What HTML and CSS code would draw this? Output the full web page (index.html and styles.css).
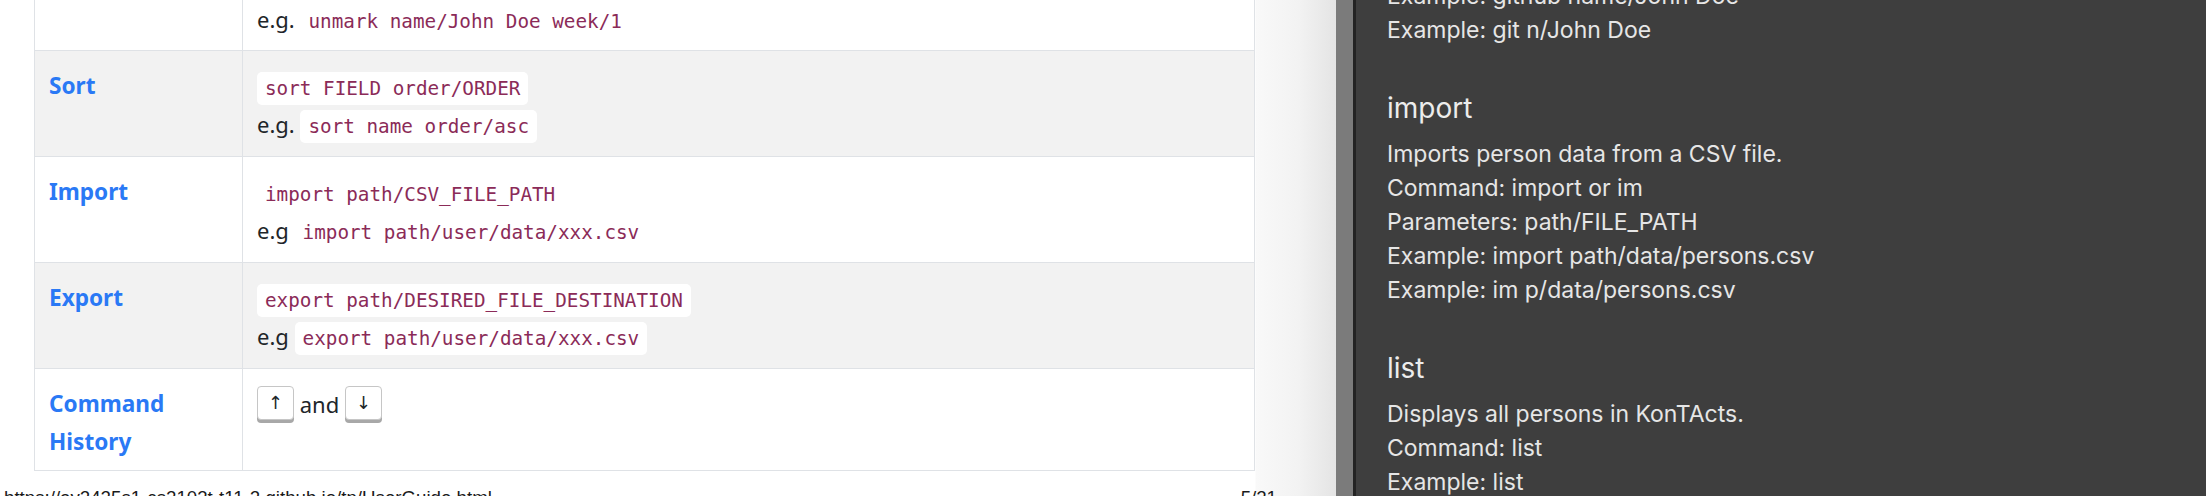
FILE: index.html
```html
<!DOCTYPE html>
<html lang="en">
<head>
<meta charset="utf-8">
<title>User Guide</title>
<link rel="stylesheet" href="styles.css">
</head>
<body>
<div class="screen">
  <div class="page">
    <table class="cmd-table">
      <colgroup><col class="col-label"><col class="col-content"></colgroup>
      <tr class="row row-first">
        <td class="label"></td>
        <td class="content"><div class="line">e.g. <code class="code">unmark name/John Doe week/1</code></div></td>
      </tr>
      <tr class="row row-alt">
        <td class="label">Sort</td>
        <td class="content">
          <div class="line"><code class="code">sort FIELD order/ORDER</code></div>
          <div class="line">e.g. <code class="code">sort name order/asc</code></div>
        </td>
      </tr>
      <tr class="row">
        <td class="label">Import</td>
        <td class="content">
          <div class="line"><code class="code">import path/CSV_FILE_PATH</code></div>
          <div class="line">e.g <code class="code">import path/user/data/xxx.csv</code></div>
        </td>
      </tr>
      <tr class="row row-alt">
        <td class="label">Export</td>
        <td class="content">
          <div class="line"><code class="code">export path/DESIRED_FILE_DESTINATION</code></div>
          <div class="line">e.g <code class="code">export path/user/data/xxx.csv</code></div>
        </td>
      </tr>
      <tr class="row row-last">
        <td class="label">Command History</td>
        <td class="content">
          <div class="line"><kbd class="key">↑</kbd> and <kbd class="key">↓</kbd></div>
        </td>
      </tr>
    </table>
    <div class="footer">
      <span>https://ay2425s1-cs2103t-t11-2.github.io/tp/UserGuide.html</span>
      <span>5/21</span>
    </div>
  </div>
  <div class="gutter"></div>
  <div class="divider"></div>
  <div class="help">
    <div class="help-inner">
      <section class="help-section">
        <p>Example: github name/John Doe</p>
        <p>Example: git n/John Doe</p>
      </section>
      <section class="help-section">
        <h2 class="help-title">import</h2>
        <p>Imports person data from a CSV file.</p>
        <p>Command: import or im</p>
        <p>Parameters: path/FILE_PATH</p>
        <p>Example: import path/data/persons.csv</p>
        <p>Example: im p/data/persons.csv</p>
      </section>
      <section class="help-section">
        <h2 class="help-title">list</h2>
        <p>Displays all persons in KonTActs.</p>
        <p>Command: list</p>
        <p>Example: list</p>
      </section>
    </div>
  </div>
</div>
</body>
</html>
```

FILE: styles.css
```css
* { box-sizing: border-box; }

html, body {
  margin: 0;
  padding: 0;
  width: 2206px;
  height: 496px;
  overflow: hidden;
  background: #ffffff;
}

.screen {
  display: flex;
  width: 2206px;
  height: 496px;
}

.page {
  flex: none;
  width: 1336px;
  display: flex;
  flex-direction: column;
  background: linear-gradient(to right, #ffffff 0, #ffffff 1255px, #f9f9f9 1256px, #f2f2f2 1300px, #e4e4e4 1336px);
}

.cmd-table {
  margin-left: 34px;
  width: 1221px;
  border-collapse: collapse;
  table-layout: fixed;
  font-family: "Noto Sans", "Open Sans", sans-serif;
  font-size: 22px;
  line-height: 38px;
  color: #212529;
}

.col-label { width: 208px; }

.cmd-table td {
  border: 1px solid #dfe2e6;
  padding: 16px 14px 13px 14px;
  vertical-align: top;
  background: #ffffff;
}

.line {
  height: 38px;
  white-space: nowrap;
}

.row-first td {
  border-top: 0;
  padding-top: 0;
  padding-bottom: 12px;
}

.row-alt td { background: #f2f2f2; }

.row-last td { padding-bottom: 9px; }

.label {
  font-weight: 700;
  font-size: 22.6px;
  color: #2a79f5;
}

.code {
  font-family: "DejaVu Sans Mono", "Liberation Mono", monospace;
  font-size: 19.3px;
  line-height: 22px;
  color: #8b2b58;
  background: #ffffff;
  border-radius: 5px;
  padding: 5px 8px;
}

.key {
  display: inline-block;
  width: 37px;
  height: 34px;
  margin-top: 1px;
  border: 1px solid #c6c6c6;
  border-radius: 4px;
  box-shadow: 0 3px 0 #a8a8a8;
  background: #ffffff;
  text-align: center;
  font-family: "DejaVu Sans", sans-serif;
  font-size: 18px;
  line-height: 32px;
  color: #212529;
  vertical-align: top;
}

.footer {
  display: flex;
  justify-content: space-between;
  margin-top: 17px;
  padding: 0 59px 0 4px;
  font-family: "Liberation Sans", Arial, sans-serif;
  font-size: 18.7px;
  line-height: 20px;
  color: #1a1a1a;
}

.gutter {
  flex: none;
  width: 17px;
  background: #7b7b7b;
}

.divider {
  flex: none;
  width: 3px;
  background: #232323;
}

.help {
  flex: 1;
  background: #3e3e3e;
  color: #e6e6e6;
  font-family: Inter, "Noto Sans", sans-serif;
  font-size: 23px;
  line-height: 34px;
  padding-left: 31px;
  overflow: hidden;
}

.help-inner { margin-top: -21px; }

.help-section + .help-section { margin-top: 41px; }

.help-section p { margin: 0; }

.help-title {
  margin: 0 0 9px;
  font-size: 28px;
  line-height: 40px;
  font-weight: 400;
  color: #ececec;
}
```
